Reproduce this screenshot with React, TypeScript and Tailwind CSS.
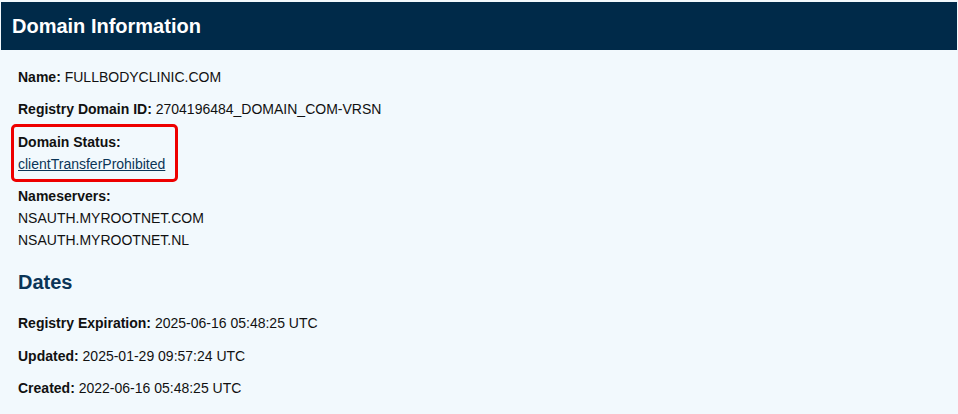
export default function App() {
  return (
    <div className="min-h-[414px] w-full bg-[#f2f9fd] pt-[2px] font-['Liberation_Sans',Arial,sans-serif] text-[14px] leading-[22px] text-[#111]">
      {/* Header */}
      <div className="mx-[1px] flex h-[48px] items-center bg-[#002a49] px-[11px]">
        <h1 className="text-[20px] font-bold text-white">Domain Information</h1>
      </div>

      <div className="flex flex-col px-[18px] pt-[16px]">
        <p>
          <b>Name:</b> FULLBODYCLINIC.COM
        </p>
        <p className="mt-[10px]">
          <b>Registry Domain ID:</b> 2704196484_DOMAIN_COM-VRSN
        </p>

        {/* Domain status, highlighted */}
        <div className="relative mt-[11px] self-start">
          <p>
            <b>Domain Status:</b>
          </p>
          <a href="#" className="text-[#0b3557] underline">
            clientTransferProhibited
          </a>
          <div className="pointer-events-none absolute -left-[7px] -right-[13px] -top-[7px] -bottom-[7px] rounded-[5px] border-[3px] border-[#ee0000]" />
        </div>

        <div className="mt-[10px]">
          <p>
            <b>Nameservers:</b>
          </p>
          <p>NSAUTH.MYROOTNET.COM</p>
          <p>NSAUTH.MYROOTNET.NL</p>
        </div>

        <h2 className="mt-[17px] text-[20px] leading-[28px] font-bold text-[#0b3557]">Dates</h2>

        <p className="mt-[16px]">
          <b>Registry Expiration:</b> 2025-06-16 05:48:25 UTC
        </p>
        <p className="mt-[11px]">
          <b>Updated:</b> 2025-01-29 09:57:24 UTC
        </p>
        <p className="mt-[10px]">
          <b>Created:</b> 2022-06-16 05:48:25 UTC
        </p>
      </div>
    </div>
  );
}
